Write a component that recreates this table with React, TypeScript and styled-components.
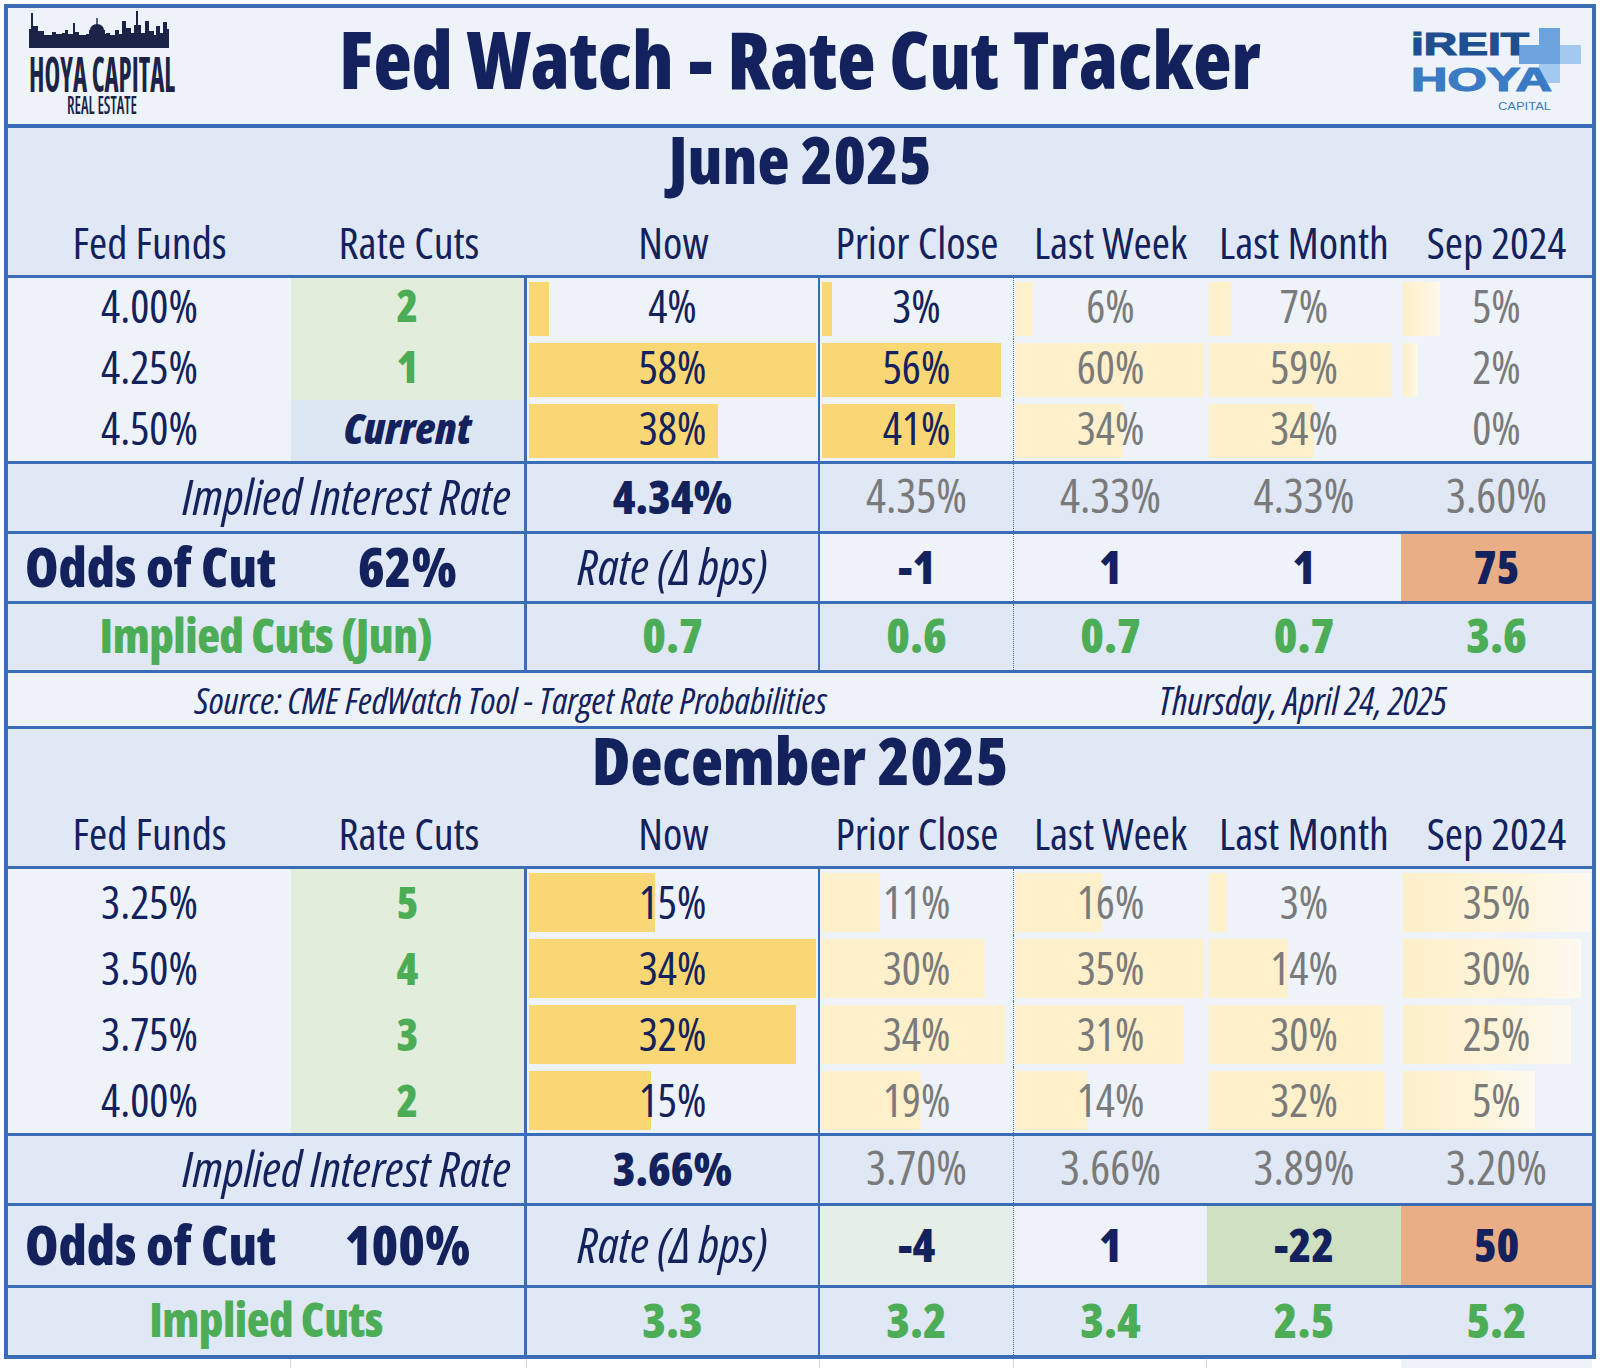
import React from "react";
import styled, { createGlobalStyle } from "styled-components";

const C = {
  blue: "#3a6db5",
  navy: "#13215c",
  gray: "#7a7a7a",
  green: "#4cad56",
  head: "#dfe8f4",
  light: "#edf3f9",
  greenBg: "#e2eddb",
  currentBg: "#dde6f3",
  strong: "#f8d774",
  soft: "#fdf0cb",
  orange: "#eaae86",
};

const COLS = "283px 236px 293px 194px 193px 194px 191px";

type Divider = "solid" | "dotted" | "none";
const DIVIDERS: Divider[] = ["solid", "dotted", "none", "none", "none"];

const dividerCss = (d: Divider) =>
  d === "solid"
    ? `border-right: 2px solid ${C.blue};`
    : d === "dotted"
    ? `border-right: 1px dotted ${C.blue};`
    : "";

const GlobalStyle = createGlobalStyle`
  html, body { margin: 0; padding: 0; background: #ffffff; }
  body {
    font-family: 'Open Sans', 'DejaVu Sans Condensed', sans-serif;
    font-stretch: 75%;
    color: ${C.navy};
  }
  * { box-sizing: border-box; }
`;

const Page = styled.div`
  width: 1600px;
  height: 1368px;
  overflow: hidden;
  padding: 4px 0 0 4px;
  background: #ffffff;
`;

const Sheet = styled.div`
  width: 1592px;
  border: 4px solid ${C.blue};
  background: ${C.light};
`;

/* ---------- header ---------- */

const Header = styled.header`
  display: grid;
  grid-template-columns: 1fr auto 1fr;
  align-items: center;
  height: 120px;
  border-bottom: 4px solid ${C.blue};
  background: ${C.light};
`;

const Title = styled.h1`
  margin: -15px 0 0;
  font-size: 79px;
  font-weight: 800;
  line-height: 80px;
  color: ${C.navy};
  white-space: nowrap;
`;

const LeftLogoSvg = styled.svg`
  justify-self: start;
  margin-left: 19px;
  overflow: visible;
  font-family: 'Open Sans', sans-serif;
  font-stretch: 75%;
`;

const RightLogoSvg = styled.svg`
  justify-self: end;
  margin: 8px 8px 0 0;
  overflow: visible;
  font-family: 'Liberation Sans', Arial, sans-serif;
`;

const SKY: [number, number, number][] = [
  [29, 32, 2], [31, 16, 2], [33, 29, 5], [38, 34, 6], [44, 38, 8], [52, 35, 4],
  [56, 37, 6], [62, 36, 3], [65, 33, 3], [68, 37, 5], [73, 26, 2], [75, 35, 4],
  [79, 38, 7], [106, 36, 4], [110, 38, 5], [115, 33, 4], [119, 37, 3], [122, 24, 4],
  [126, 31, 5], [131, 36, 3], [134, 28, 2], [136, 14, 2], [138, 28, 3], [141, 36, 4],
  [145, 24, 4], [149, 34, 5], [154, 38, 2], [156, 29, 4], [160, 36, 3], [163, 25, 4],
  [167, 32, 2],
];

function HoyaLogo() {
  const ox = 27;
  const oy = 13;
  return (
    <LeftLogoSvg width={152} height={112} viewBox="0 0 152 112">
      <g fill="#1b2346">
        <rect x={29 - ox} y={43 - oy} width={140} height={8} />
        {SKY.map(([x, top, w], i) => (
          <rect key={i} x={x - ox} y={top - oy} width={w} height={43 - top} />
        ))}
        <rect x={86 - ox} y={37 - oy} width={22} height={6} />
        <rect x={89 - ox} y={33 - oy} width={16} height={4} />
        <path d={`M${90 - ox} ${33 - oy} A7 6 0 0 1 ${104 - ox} ${33 - oy} Z`} />
        <rect x={96.3 - ox} y={21 - oy} width={1.4} height={7} />
        <text x={2} y={82} fontSize={48} fontWeight={700} textLength={146} lengthAdjust="spacingAndGlyphs">
          HOYA CAPITAL
        </text>
        <text x={40} y={104} fontSize={25} fontWeight={600} textLength={70} lengthAdjust="spacingAndGlyphs">
          REAL ESTATE
        </text>
      </g>
    </LeftLogoSvg>
  );
}

function IReitLogo() {
  return (
    <RightLogoSvg width={176} height={90} viewBox="0 0 176 90">
      <rect x={131} y={3} width={21} height={55} fill="#a3c9ef" />
      <rect x={111} y={20} width={62} height={19} fill="#a3c9ef" />
      <rect x={131} y={3} width={21} height={36} fill="#6aa3de" />
      <rect x={111} y={20} width={41} height={19} fill="#6aa3de" />
      <text
        x={3}
        y={30}
        fontSize={32}
        fontWeight={700}
        fill="#1f4f8f"
        stroke="#1f4f8f"
        strokeWidth={1.2}
        textLength={118}
        lengthAdjust="spacingAndGlyphs"
      >
        iREIT
      </text>
      <text
        x={3}
        y={66}
        fontSize={33}
        fontWeight={700}
        fill="#3a7bc3"
        stroke="#3a7bc3"
        strokeWidth={1.2}
        textLength={141}
        lengthAdjust="spacingAndGlyphs"
      >
        HOYA
      </text>
      <text x={90} y={85} fontSize={11} fontWeight={400} fill="#3a7bc3" textLength={53} lengthAdjust="spacingAndGlyphs">
        CAPITAL
      </text>
    </RightLogoSvg>
  );
}

/* ---------- section head ---------- */

const SectionHead = styled.div<{ $h: number }>`
  display: flex;
  flex-direction: column;
  justify-content: space-between;
  height: ${(p) => p.$h}px;
  background: ${C.head};
  border-bottom: 3px solid ${C.blue};
`;

const SectionTitle = styled.h2`
  margin: 0;
  text-align: center;
  font-size: 66px;
  font-weight: 800;
  line-height: 60px;
  color: ${C.navy};
`;

const rowGrid = `
  display: grid;
  grid-template-columns: ${COLS};
  grid-template-rows: minmax(0, 1fr);
`;

const LabelRow = styled.div`
  ${rowGrid}
  align-items: center;
  height: 66px;
`;

const Label = styled.div`
  text-align: center;
  font-size: 44px;
  font-weight: 500;
  line-height: 1;
  white-space: nowrap;
  color: ${C.navy};
`;

/* ---------- data rows ---------- */

const DataBlock = styled.div`
  border-bottom: 3px solid ${C.blue};
`;

const DataRow = styled.div<{ $h: number; $lift: number }>`
  ${rowGrid}
  height: ${(p) => p.$h}px;
  line-height: 1;
  & > * {
    padding-bottom: ${(p) => p.$lift}px;
  }
`;

const FundsCell = styled.div`
  display: flex;
  align-items: center;
  justify-content: center;
  font-size: 45px;
  font-weight: 400;
  color: ${C.navy};
`;

const CutsCell = styled.div<{ $current?: boolean }>`
  display: flex;
  align-items: center;
  justify-content: center;
  background: ${(p) => (p.$current ? C.currentBg : C.greenBg)};
  border-right: 3px solid ${C.blue};
  font-size: ${(p) => (p.$current ? 43 : 44)}px;
  font-weight: 800;
  font-style: ${(p) => (p.$current ? "italic" : "normal")};
  color: ${(p) => (p.$current ? C.navy : C.green)};
`;

type Tone = "strong" | "soft" | "fade";

const barImage = (t: Tone) =>
  t === "strong"
    ? `linear-gradient(${C.strong}, ${C.strong})`
    : t === "soft"
    ? `linear-gradient(${C.soft}, ${C.soft})`
    : `linear-gradient(to right, #fdefc9, #fdf4da 60%, #fdf9ef)`;

const BarCell = styled.div<{ $w: number; $tone: Tone; $muted: boolean; $divider: Divider }>`
  display: flex;
  align-items: center;
  justify-content: center;
  font-size: 45px;
  font-weight: 400;
  color: ${(p) => (p.$muted ? C.gray : C.navy)};
  background-color: ${C.light};
  background-image: ${(p) => barImage(p.$tone)};
  background-repeat: no-repeat;
  background-position: 2px 4px;
  background-size: ${(p) => p.$w}px calc(100% - 7px);
  ${(p) => dividerCss(p.$divider)}
`;

/* ---------- summary rows ---------- */

const SummaryRow = styled.div<{ $h: number; $last?: boolean }>`
  ${rowGrid}
  height: ${(p) => p.$h}px;
  line-height: 1;
  background: ${C.head};
  border-bottom: ${(p) => (p.$last ? "none" : `3px solid ${C.blue}`)};
  & > * {
    padding-bottom: 4px;
  }
`;

const RowLabel = styled.div<{ $variant: "implied" | "cuts" }>`
  grid-column: 1 / 3;
  display: flex;
  align-items: center;
  justify-content: ${(p) => (p.$variant === "implied" ? "flex-end" : "center")};
  padding-right: ${(p) => (p.$variant === "implied" ? 13 : 0)}px;
  border-right: 3px solid ${C.blue};
  font-size: ${(p) => (p.$variant === "implied" ? 50 : 47)}px;
  font-weight: ${(p) => (p.$variant === "implied" ? 400 : 800)};
  font-style: ${(p) => (p.$variant === "implied" ? "italic" : "normal")};
  letter-spacing: ${(p) => (p.$variant === "implied" ? "0" : "-0.5px")};
  color: ${(p) => (p.$variant === "implied" ? C.navy : C.green)};
  white-space: nowrap;
`;

const OddsTitle = styled.div`
  display: flex;
  align-items: center;
  padding-left: 17px;
  font-size: 54px;
  font-weight: 800;
  color: ${C.navy};
  white-space: nowrap;
`;

const OddsPct = styled.div`
  display: flex;
  align-items: center;
  justify-content: center;
  border-right: 3px solid ${C.blue};
  font-size: 54px;
  font-weight: 800;
  color: ${C.navy};
`;

type Kind = "lead" | "muted" | "rate" | "delta" | "cuts";

const KIND: Record<Kind, string> = {
  lead: `font-size: 46px; font-weight: 800; color: ${C.navy};`,
  muted: `font-size: 47px; font-weight: 400; color: ${C.gray};`,
  rate: `font-size: 50px; font-weight: 400; font-style: italic; color: ${C.navy};`,
  delta: `font-size: 46px; font-weight: 800; color: ${C.navy};`,
  cuts: `font-size: 48px; font-weight: 800; color: ${C.green};`,
};

const Metric = styled.div<{ $kind: Kind; $divider: Divider; $bg?: string }>`
  display: flex;
  align-items: center;
  justify-content: center;
  white-space: nowrap;
  background: ${(p) => p.$bg || "transparent"};
  ${(p) => KIND[p.$kind]}
  ${(p) => dividerCss(p.$divider)}
`;

/* ---------- source row ---------- */

const SourceRow = styled.div`
  ${rowGrid}
  height: 56px;
  line-height: 1;
  border-bottom: 3px solid ${C.blue};
  background: ${C.light};
`;

const SourceText = styled.div<{ $span: string; $size: number }>`
  grid-column: ${(p) => p.$span};
  display: flex;
  align-items: center;
  justify-content: center;
  font-size: ${(p) => p.$size}px;
  font-style: italic;
  color: ${C.navy};
  white-space: nowrap;
`;

/* ---------- footer grid ---------- */

const Footer = styled.div`
  display: grid;
  grid-template-columns: ${COLS};
  width: 1584px;
  height: 9px;
  margin-left: 4px;
`;

const FooterCell = styled.div<{ $line: boolean; $tint?: boolean }>`
  border-right: ${(p) => (p.$line ? "1px solid #d6d6d6" : "none")};
  background: ${(p) => (p.$tint ? "#eef3fa" : "transparent")};
`;

/* ---------- data ---------- */

type Cell = { v: string; w: number };
type Row = { funds: string; cuts: string; cells: Cell[] };
type SectionData = {
  title: string;
  headH: number;
  rowH: number;
  lift: number;
  strong: boolean[];
  rows: Row[];
  implied: string[];
  odds: string;
  deltas: { v: string; bg: string }[];
  oddsH: number;
  cutsLabel: string;
  cuts: string[];
};

const HEADS = ["Fed Funds", "Rate Cuts", "Now", "Prior Close", "Last Week", "Last Month", "Sep 2024"];

const JUNE: SectionData = {
  title: "June 2025",
  headH: 150,
  rowH: 61,
  lift: 7,
  strong: [true, true, false, false, false],
  rows: [
    { funds: "4.00%", cuts: "2", cells: [{ v: "4%", w: 20 }, { v: "3%", w: 10 }, { v: "6%", w: 17 }, { v: "7%", w: 22 }, { v: "5%", w: 37 }] },
    { funds: "4.25%", cuts: "1", cells: [{ v: "58%", w: 287 }, { v: "56%", w: 179 }, { v: "60%", w: 188 }, { v: "59%", w: 182 }, { v: "2%", w: 15 }] },
    { funds: "4.50%", cuts: "Current", cells: [{ v: "38%", w: 189 }, { v: "41%", w: 133 }, { v: "34%", w: 107 }, { v: "34%", w: 105 }, { v: "0%", w: 0 }] },
  ],
  implied: ["4.34%", "4.35%", "4.33%", "4.33%", "3.60%"],
  odds: "62%",
  deltas: [
    { v: "-1", bg: C.light },
    { v: "1", bg: C.light },
    { v: "1", bg: C.light },
    { v: "75", bg: C.orange },
  ],
  oddsH: 70,
  cutsLabel: "Implied Cuts (Jun)",
  cuts: ["0.7", "0.6", "0.7", "0.7", "3.6"],
};

const DEC: SectionData = {
  title: "December 2025",
  headH: 140,
  rowH: 66,
  lift: 1,
  strong: [true, false, false, false, false],
  rows: [
    { funds: "3.25%", cuts: "5", cells: [{ v: "15%", w: 126 }, { v: "11%", w: 58 }, { v: "16%", w: 86 }, { v: "3%", w: 18 }, { v: "35%", w: 187 }] },
    { funds: "3.50%", cuts: "4", cells: [{ v: "34%", w: 287 }, { v: "30%", w: 163 }, { v: "35%", w: 188 }, { v: "14%", w: 79 }, { v: "30%", w: 178 }] },
    { funds: "3.75%", cuts: "3", cells: [{ v: "32%", w: 267 }, { v: "34%", w: 183 }, { v: "31%", w: 168 }, { v: "30%", w: 174 }, { v: "25%", w: 168 }] },
    { funds: "4.00%", cuts: "2", cells: [{ v: "15%", w: 122 }, { v: "19%", w: 99 }, { v: "14%", w: 71 }, { v: "32%", w: 176 }, { v: "5%", w: 132 }] },
  ],
  implied: ["3.66%", "3.70%", "3.66%", "3.89%", "3.20%"],
  odds: "100%",
  deltas: [
    { v: "-4", bg: "#e6eee8" },
    { v: "1", bg: C.light },
    { v: "-22", bg: "#cfe1c0" },
    { v: "50", bg: C.orange },
  ],
  oddsH: 82,
  cutsLabel: "Implied Cuts",
  cuts: ["3.3", "3.2", "3.4", "2.5", "5.2"],
};

function Section({ d, last }: { d: SectionData; last?: boolean }) {
  return (
    <>
      <SectionHead $h={d.headH}>
        <SectionTitle>{d.title}</SectionTitle>
        <LabelRow>
          {HEADS.map((h) => (
            <Label key={h}>{h}</Label>
          ))}
        </LabelRow>
      </SectionHead>
      <DataBlock>
        {d.rows.map((r) => (
          <DataRow key={r.funds} $h={d.rowH} $lift={d.lift}>
            <FundsCell>{r.funds}</FundsCell>
            <CutsCell $current={r.cuts === "Current"}>{r.cuts}</CutsCell>
            {r.cells.map((c, i) => (
              <BarCell
                key={i}
                $w={c.w}
                $tone={d.strong[i] ? "strong" : i === 4 ? "fade" : "soft"}
                $muted={!d.strong[i]}
                $divider={DIVIDERS[i]}
              >
                {c.v}
              </BarCell>
            ))}
          </DataRow>
        ))}
      </DataBlock>
      <SummaryRow $h={70}>
        <RowLabel $variant="implied">Implied Interest Rate</RowLabel>
        {d.implied.map((v, i) => (
          <Metric key={i} $kind={i === 0 ? "lead" : "muted"} $divider={DIVIDERS[i]}>
            {v}
          </Metric>
        ))}
      </SummaryRow>
      <SummaryRow $h={d.oddsH}>
        <OddsTitle>Odds of Cut</OddsTitle>
        <OddsPct>{d.odds}</OddsPct>
        <Metric $kind="rate" $divider="solid">
          Rate (Δ bps)
        </Metric>
        {d.deltas.map((x, i) => (
          <Metric key={i} $kind="delta" $divider={DIVIDERS[i + 1]} $bg={x.bg}>
            {x.v}
          </Metric>
        ))}
      </SummaryRow>
      <SummaryRow $h={last ? 67 : 69} $last={last}>
        <RowLabel $variant="cuts">{d.cutsLabel}</RowLabel>
        {d.cuts.map((v, i) => (
          <Metric key={i} $kind="cuts" $divider={DIVIDERS[i]}>
            {v}
          </Metric>
        ))}
      </SummaryRow>
    </>
  );
}

export default function App() {
  return (
    <>
      <GlobalStyle />
      <Page>
        <Sheet>
          <Header>
            <HoyaLogo />
            <Title>Fed Watch - Rate Cut Tracker</Title>
            <IReitLogo />
          </Header>
          <Section d={JUNE} />
          <SourceRow>
            <SourceText $span="1 / 5" $size={37}>
              Source: CME FedWatch Tool - Target Rate Probabilities
            </SourceText>
            <SourceText $span="5 / 8" $size={38}>
              Thursday, April 24, 2025
            </SourceText>
          </SourceRow>
          <Section d={DEC} last />
        </Sheet>
        <Footer>
          {[0, 1, 2, 3, 4, 5, 6].map((i) => (
            <FooterCell key={i} $line={i < 5} $tint={i === 6} />
          ))}
        </Footer>
      </Page>
    </>
  );
}
